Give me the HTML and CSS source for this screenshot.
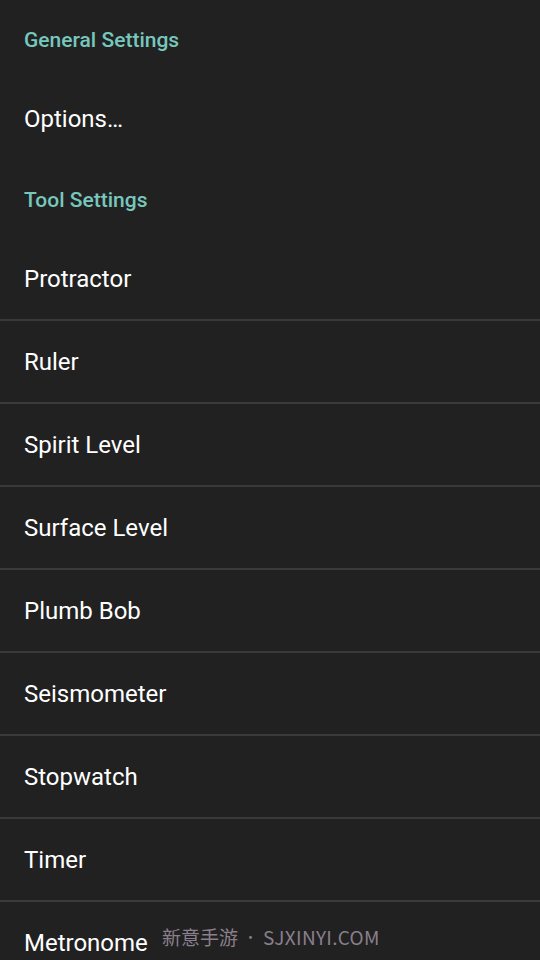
FILE: index.html
```html
<!DOCTYPE html>
<html lang="en">
<head>
    <meta charset="UTF-8">
    <meta name="viewport" content="width=device-width, initial-scale=1.0">
    <title>Settings</title>
    <link rel="stylesheet" href="styles.css">
</head>
<body>

    <!-- General -->
    <div class="category">General Settings</div>
    <div class="pref first">Options…</div>

    <!-- Tools -->
    <div class="category tools">Tool Settings</div>
    <div class="pref-list">
        <div class="pref">Protractor</div>
        <div class="pref">Ruler</div>
        <div class="pref">Spirit Level</div>
        <div class="pref">Surface Level</div>
        <div class="pref">Plumb Bob</div>
        <div class="pref">Seismometer</div>
        <div class="pref">Stopwatch</div>
        <div class="pref">Timer</div>
        <div class="pref">Metronome</div>
    </div>

    <div class="watermark"><span class="wm-cn">新意手游</span><span class="wm-dot">•</span><span class="wm-en">SJXINYI.COM</span></div>

</body>
</html>
```

FILE: styles.css
```css
html, body {
    margin: 0;
    padding: 0;
    background: #212121;
    height: 960px;
    overflow: hidden;
}
body {
    font-family: Roboto, "Noto Sans", sans-serif;
    color: #ffffff;
    position: relative;
}
.category {
    height: 80px;
    display: flex;
    align-items: center;
    padding-left: 24px;
    color: #77c7bd;
    font-size: 21px;
    font-weight: 500;
    box-sizing: border-box;
}
.tools {
    padding-top: 3px;
}
.pref {
    height: 81px;
    display: flex;
    align-items: center;
    padding-left: 24px;
    font-size: 24px;
    border-bottom: 2px solid #3a3a3a;
}
.pref.first {
    height: 78px;
    border-bottom: none;
}
.watermark {
    position: absolute;
    left: 162px;
    top: 923px;
    display: flex;
    align-items: center;
    font-family: "Noto Sans CJK SC", "Noto Sans", sans-serif;
    font-size: 19px;
    color: #8a7f8c;
}
.wm-dot {
    font-size: 13px;
    margin: 0 6px 0 6px;
}
.wm-en {
    letter-spacing: 0.3px;
}
```
